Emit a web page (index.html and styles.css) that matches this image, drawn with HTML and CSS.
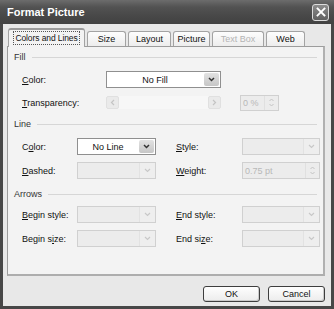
FILE: index.html
```html
<!DOCTYPE html>
<html>
<head>
    <meta charset="UTF-8">
    <title>Format Picture</title>
    <link rel="stylesheet" href="styles.css">
</head>
<body>
    <div class="window">
        <div class="titlebar">
            <span class="title">Format Picture</span>
            <button class="closeButton">
                <svg width="10" height="10" viewBox="0 0 10 10"><path d="M1.5 1.5 L8.5 8.5 M8.5 1.5 L1.5 8.5" stroke="white" stroke-width="1.8" stroke-linecap="square"/></svg>
            </button>
        </div>
        <div class="client">
            <div class="tabs">
                <div class="tab active" style="width: 77px"><span class="focus">Colors and Lines</span></div>
                <div class="tab" style="width: 39px">Size</div>
                <div class="tab" style="width: 43px">Layout</div>
                <div class="tab" style="width: 37px">Picture</div>
                <div class="tab disabled" style="width: 52px">Text Box</div>
                <div class="tab" style="width: 39px">Web</div>
            </div>
            <div class="panel">
                <div class="group"><span>Fill</span></div>
                <div class="fillRows">
                    <label><u>C</u>olor:</label>
                    <div class="combo">
                        <span class="value">No Fill</span>
                        <span class="arrow"><svg width="7" height="5" viewBox="0 0 7 5"><path d="M1 1 L3.5 3.5 L6 1" stroke="#333" stroke-width="1.5" fill="none"/></svg></span>
                    </div>
                    <span></span>
                    <label><u>T</u>ransparency:</label>
                    <div class="slider">
                        <span class="sbtn"><svg width="5" height="7" viewBox="0 0 5 7"><path d="M4 1 L1.5 3.5 L4 6" stroke="#c4c4c4" stroke-width="1.2" fill="none"/></svg></span>
                        <span class="track"></span>
                        <span class="sbtn"><svg width="5" height="7" viewBox="0 0 5 7"><path d="M1 1 L3.5 3.5 L1 6" stroke="#c4c4c4" stroke-width="1.2" fill="none"/></svg></span>
                    </div>
                    <div class="spin off">
                        <span class="value">0 %</span>
                        <span class="spinbtn"><svg width="7" height="11" viewBox="0 0 7 11"><path d="M1.5 4 L3.5 2 L5.5 4 M1.5 7 L3.5 9 L5.5 7" stroke="#c4c4c4" stroke-width="1" fill="none"/></svg></span>
                    </div>
                </div>

                <div class="group"><span>Line</span></div>
                <div class="pairRows">
                    <label>C<u>o</u>lor:</label>
                    <div class="combo">
                        <span class="value">No Line</span>
                        <span class="arrow"><svg width="7" height="5" viewBox="0 0 7 5"><path d="M1 1 L3.5 3.5 L6 1" stroke="#333" stroke-width="1.5" fill="none"/></svg></span>
                    </div>
                    <label class="second"><u>S</u>tyle:</label>
                    <div class="combo off"><span class="value"></span><span class="arrow"><svg width="7" height="5" viewBox="0 0 7 5"><path d="M1 1 L3.5 3.5 L6 1" stroke="#c8c8c8" stroke-width="1.2" fill="none"/></svg></span></div>
                    <label><u>D</u>ashed:</label>
                    <div class="combo off"><span class="value"></span><span class="arrow"><svg width="7" height="5" viewBox="0 0 7 5"><path d="M1 1 L3.5 3.5 L6 1" stroke="#c8c8c8" stroke-width="1.2" fill="none"/></svg></span></div>
                    <label class="second"><u>W</u>eight:</label>
                    <div class="spin off">
                        <span class="value">0.75 pt</span>
                        <span class="spinbtn"><svg width="7" height="11" viewBox="0 0 7 11"><path d="M1.5 4 L3.5 2 L5.5 4 M1.5 7 L3.5 9 L5.5 7" stroke="#c4c4c4" stroke-width="1" fill="none"/></svg></span>
                    </div>
                </div>

                <div class="group"><span>Arrows</span></div>
                <div class="pairRows last">
                    <label><u>B</u>egin style:</label>
                    <div class="combo off"><span class="value"></span><span class="arrow"><svg width="7" height="5" viewBox="0 0 7 5"><path d="M1 1 L3.5 3.5 L6 1" stroke="#c8c8c8" stroke-width="1.2" fill="none"/></svg></span></div>
                    <label class="second"><u>E</u>nd style:</label>
                    <div class="combo off"><span class="value"></span><span class="arrow"><svg width="7" height="5" viewBox="0 0 7 5"><path d="M1 1 L3.5 3.5 L6 1" stroke="#c8c8c8" stroke-width="1.2" fill="none"/></svg></span></div>
                    <label>Begin s<u>i</u>ze:</label>
                    <div class="combo off"><span class="value"></span><span class="arrow"><svg width="7" height="5" viewBox="0 0 7 5"><path d="M1 1 L3.5 3.5 L6 1" stroke="#c8c8c8" stroke-width="1.2" fill="none"/></svg></span></div>
                    <label class="second">End si<u>z</u>e:</label>
                    <div class="combo off"><span class="value"></span><span class="arrow"><svg width="7" height="5" viewBox="0 0 7 5"><path d="M1 1 L3.5 3.5 L6 1" stroke="#c8c8c8" stroke-width="1.2" fill="none"/></svg></span></div>
                </div>
            </div>
            <div class="buttons">
                <button class="btn">OK</button>
                <button class="btn">Cancel</button>
            </div>
        </div>
    </div>
</body>
</html>
```

FILE: styles.css
```css
body {
    margin: 0;
    padding: 0;
    font-family: "Liberation Sans", Arial, sans-serif;
    font-size: 9px;
    color: #111;
    background-color: #333;
}

.window {
    width: 334px;
    height: 309px;
    box-sizing: border-box;
    display: flex;
    flex-direction: column;
    background-color: #474747;
    padding: 0 3px 3px 3px;
}

.titlebar {
    height: 24px;
    flex-shrink: 0;
    display: flex;
    align-items: center;
    justify-content: space-between;
    margin: 0 -3px;
    padding: 0 5px 0 7px;
    background: linear-gradient(#6c6c6c, #525252 30%, #474747 70%, #424242);
}

.title {
    color: white;
    font-weight: bold;
    font-size: 11px;
}

.closeButton {
    width: 17px;
    height: 17px;
    padding: 0;
    border: 1px solid #dcdcdc;
    border-radius: 3px;
    background: linear-gradient(#8c8c8c, #606060);
    display: flex;
    align-items: center;
    justify-content: center;
}

.client {
    flex: 1;
    background-color: #e8e8e8;
    padding: 4px 6px 0 4px;
    display: flex;
    flex-direction: column;
}

.tabs {
    display: flex;
    align-items: flex-end;
    height: 18px;
    padding-left: 1px;
    position: relative;
    z-index: 1;
}

.tab {
    height: 15px;
    line-height: 14px;
    text-align: center;
    border: 1px solid #a3a3a3;
    border-bottom: none;
    border-radius: 3px 3px 0 0;
    background: linear-gradient(#fdfdfd, #ededed);
    margin-right: 2px;
    box-sizing: border-box;
    white-space: nowrap;
}

.tab.active {
    height: 19px;
    background: #f3f3f3;
    line-height: 16px;
    margin-bottom: -1px;
    border-top: 2px solid #9a9a9a;
    font-size: 8.5px;
    letter-spacing: -0.1px;
}

.tab.disabled {
    color: #b4b4b4;
}

.focus {
    border: 1px dotted #555;
    padding: 1px 1px;
}

.panel {
    height: 230px;
    background-color: #f3f3f3;
    border: 1px solid #9c9c9c;
    border-bottom: 2px solid #adadad;
    border-right: 2px solid #b0b0b0;
    box-sizing: border-box;
    padding: 3px 6px 0 6px;
}

.group {
    display: flex;
    align-items: center;
    gap: 6px;
    height: 14px;
    color: #333;
}

.group::after {
    content: "";
    flex: 1;
    border-top: 1px solid #d6d6d6;
}

.fillRows {
    display: grid;
    grid-template-columns: 84px 115px 58px;
    grid-auto-rows: 17px;
    row-gap: 6px;
    align-items: center;
    padding: 7px 0 6px 8px;
}

.fillRows .spin {
    height: 16px;
    margin-left: 19px;
}

.pairRows {
    display: grid;
    grid-template-columns: 55px 79px 86px 78px;
    grid-auto-rows: 17px;
    row-gap: 7px;
    align-items: center;
    padding: 7px 0 8px 8px;
}

.pairRows.last {
    padding-top: 5px;
}

.second {
    padding-left: 20px;
}

.combo, .spin {
    height: 17px;
    box-sizing: border-box;
    border: 1px solid #8f8f8f;
    background: white;
    display: flex;
    align-items: stretch;
}

.combo .value, .spin .value {
    flex: 1;
    display: flex;
    align-items: center;
    justify-content: center;
}

.spin .value {
    justify-content: flex-start;
    padding-left: 2px;
}

.arrow {
    width: 15px;
    margin: 1px;
    background: linear-gradient(#e2e2e2, #c6c6c6);
    border-radius: 2px;
    display: flex;
    align-items: center;
    justify-content: center;
}

.combo.off, .spin.off {
    border-color: #d0d0d0;
    background: #ececec;
    color: #b8b8b8;
}

.combo.off .arrow {
    background: #eeeeee;
    border-left: 1px solid #e2e2e2;
    margin: 0;
    border-radius: 0;
}

.slider {
    height: 13px;
    display: flex;
    background: #f7f7f7;
}

.sbtn {
    width: 13px;
    background: #eaeaea;
    border: 1px solid #e0e0e0;
    border-radius: 2px;
    box-sizing: border-box;
    display: flex;
    align-items: center;
    justify-content: center;
}

.track {
    flex: 1;
}

.spinbtn {
    width: 13px;
    border-left: 1px solid #e0e0e0;
    display: flex;
    align-items: center;
    justify-content: center;
}

.buttons {
    display: flex;
    justify-content: flex-end;
    gap: 8px;
    padding-top: 10px;
}

.btn {
    width: 57px;
    height: 16px;
    padding: 0;
    font-family: "Liberation Sans", Arial, sans-serif;
    font-size: 9px;
    color: #111;
    background: linear-gradient(#fefefe, #ececec);
    border: 1px solid #3e3e3e;
    border-radius: 3px;
    box-shadow: inset -1px -1px 0 #cacaca;
}
```
